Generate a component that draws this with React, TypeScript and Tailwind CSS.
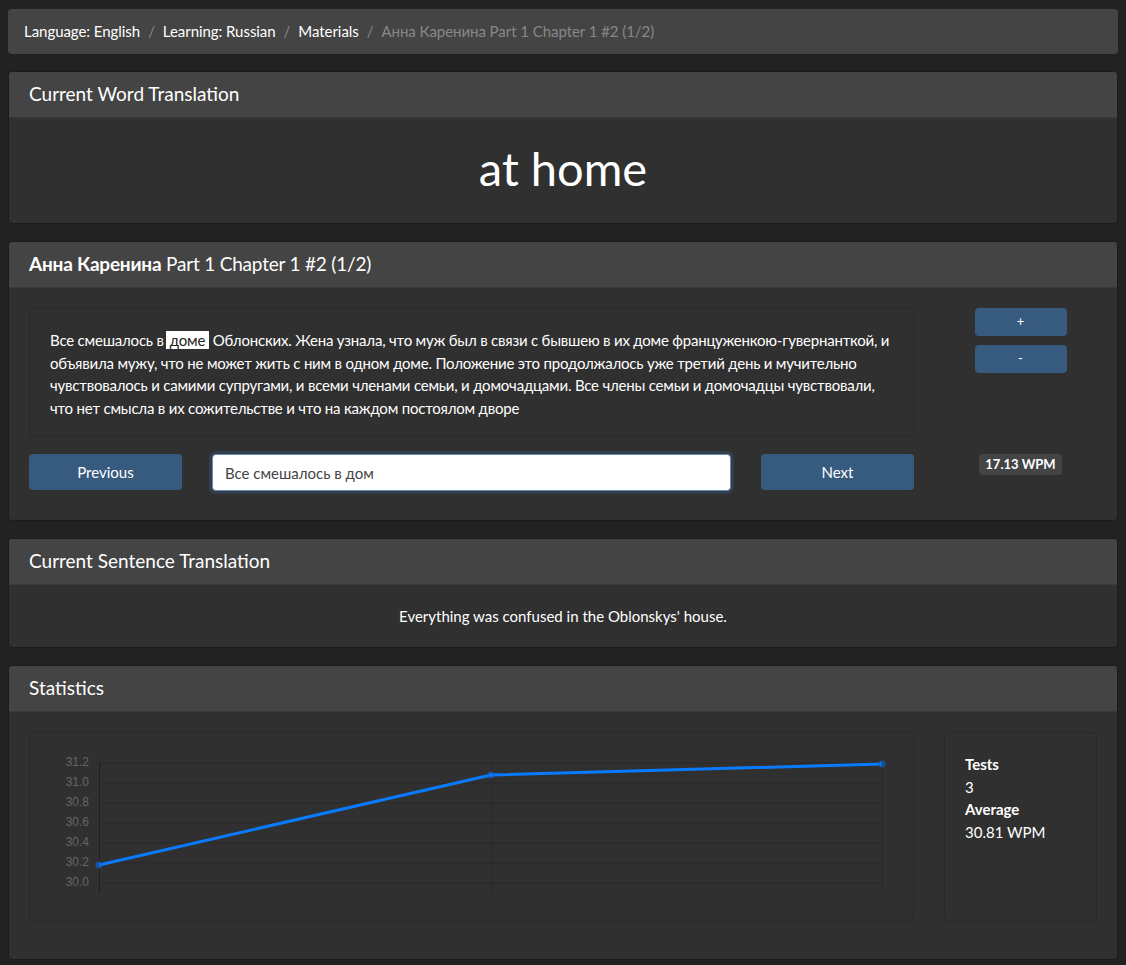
import React from "react";

const FONT = "font-['Lato','Noto_Sans',sans-serif]";

const CRUMBS = ["Language: English", "Learning: Russian", "Materials"];

const Y_TICKS = ["31.2", "31.0", "30.8", "30.6", "30.4", "30.2", "30.0"];

// plot coordinates are relative to the chart box content area
const POINTS = [
  { x: 69, y: 132 },
  { x: 461, y: 42 },
  { x: 852, y: 31 },
];

function Card({ title, children }: { title: React.ReactNode; children: React.ReactNode }) {
  return (
    <div className="rounded border border-[#1c1c1c] bg-[#303030] overflow-hidden">
      <div className="h-[46px] flex items-center px-5 bg-[#444444] border-b border-[#3a3a3a] text-[19px] text-white">
        {title}
      </div>
      {children}
    </div>
  );
}

function WpmChart() {
  return (
    <svg width={883} height={188} className="block">
      {Y_TICKS.map((t, i) => (
        <g key={t}>
          <line x1={69} x2={852} y1={30 + i * 20} y2={30 + i * 20} stroke="#282828" strokeWidth={1} />
          <text
            x={59}
            y={30 + i * 20}
            textAnchor="end"
            dominantBaseline="middle"
            fill="#666666"
            fontSize={12}
            fontFamily="'Liberation Sans', Arial, sans-serif"
          >
            {t}
          </text>
        </g>
      ))}
      <line x1={69.5} x2={69.5} y1={30} y2={160} stroke="#1f1f1f" strokeWidth={1} />
      <line x1={461.5} x2={461.5} y1={30} y2={160} stroke="#282828" strokeWidth={1} />
      <line x1={852.5} x2={852.5} y1={30} y2={160} stroke="#282828" strokeWidth={1} />
      <polyline
        points={POINTS.map((p) => `${p.x},${p.y}`).join(" ")}
        fill="none"
        stroke="#0a7bff"
        strokeWidth={3}
        strokeLinejoin="round"
      />
      {POINTS.map((p) => (
        <circle key={p.x} cx={p.x} cy={p.y} r={3} fill="rgba(10,123,255,0.35)" stroke="#0b5fc4" strokeWidth={1} />
      ))}
    </svg>
  );
}

export default function App() {
  return (
    <div className={`min-h-screen bg-[#222222] px-2 pt-[9px] pb-2 text-[15px] leading-[1.5] text-white ${FONT}`}>
      <div className="flex flex-col gap-[17px]">
        {/* Breadcrumb */}
        <nav className="h-[45px] flex items-center px-4 rounded bg-[#444444] tracking-[-0.05px]">
          {CRUMBS.map((c) => (
            <React.Fragment key={c}>
              <span className="text-white">{c}</span>
              <span className="px-2 text-[#888888]">/</span>
            </React.Fragment>
          ))}
          <span className="text-[#888888]">Анна Каренина Part 1 Chapter 1 #2 (1/2)</span>
        </nav>

        {/* Current word */}
        <Card title="Current Word Translation">
          <div className="h-[105px] pb-1 flex items-center justify-center text-[47px] leading-none">at home</div>
        </Card>

        {/* Reader */}
        <Card
          title={
            <span className="tracking-[-0.2px]">
              <span className="font-bold">Анна Каренина</span> Part 1 Chapter 1 #2 (1/2)
            </span>
          }
        >
          <div className="grid grid-cols-[1fr_153px] gap-x-[30px] gap-y-[17px] px-5 pt-5 pb-[29px]">
            <div className="h-[129px] rounded border border-[#292929] p-5 tracking-[-0.2px]">
              Все смешалось в<span className="ml-[2px] px-1 bg-white text-[#222222]">доме</span> Облонских.
              Жена узнала, что муж был в связи с бывшею в их доме француженкою-гувернанткой, и объявила мужу, что не
              может жить с ним в одном доме. Положение это продолжалось уже третий день и мучительно чувствовалось и
              самими супругами, и всеми членами семьи, и домочадцами. Все члены семьи и домочадцы чувствовали, что нет
              смысла в их сожительстве и что на каждом постоялом дворе
            </div>
            <div className="flex flex-col items-center gap-[9px]">
              <button className="w-[92px] h-[28px] rounded bg-[#375a7f] text-[13px] text-white">+</button>
              <button className="w-[92px] h-[28px] rounded bg-[#375a7f] text-[13px] text-white">-</button>
            </div>

            <div className="flex items-start gap-[30px]">
              <button className="w-[153px] h-9 rounded bg-[#375a7f] text-white">Previous</button>
              <input
                readOnly
                value="Все смешалось в дом"
                className="flex-1 h-[37px] rounded bg-white px-3 text-[#444444] border border-[#6b8bb0] shadow-[0_0_0_3px_rgba(55,90,127,0.35)] outline-none"
              />
              <button className="w-[153px] h-9 rounded bg-[#375a7f] text-white">Next</button>
            </div>
            <div className="flex justify-center items-start">
              <span className="h-[21px] px-[6px] flex items-center rounded bg-[#444444] text-[13px] font-bold">
                17.13 WPM
              </span>
            </div>
          </div>
        </Card>

        {/* Sentence translation */}
        <Card title="Current Sentence Translation">
          <div className="h-[62px] flex items-center justify-center">Everything was confused in the Oblonskys' house.</div>
        </Card>

        {/* Statistics */}
        <Card title="Statistics">
          <div className="grid grid-cols-[1fr_153px] gap-x-[30px] px-5 pt-5 pb-[37px]">
            <div className="h-[190px] rounded border border-[#292929]">
              <WpmChart />
            </div>
            <div className="h-[190px] rounded border border-[#292929] p-5">
              <div className="font-bold">Tests</div>
              <div>3</div>
              <div className="font-bold">Average</div>
              <div>30.81 WPM</div>
            </div>
          </div>
        </Card>
      </div>
    </div>
  );
}
